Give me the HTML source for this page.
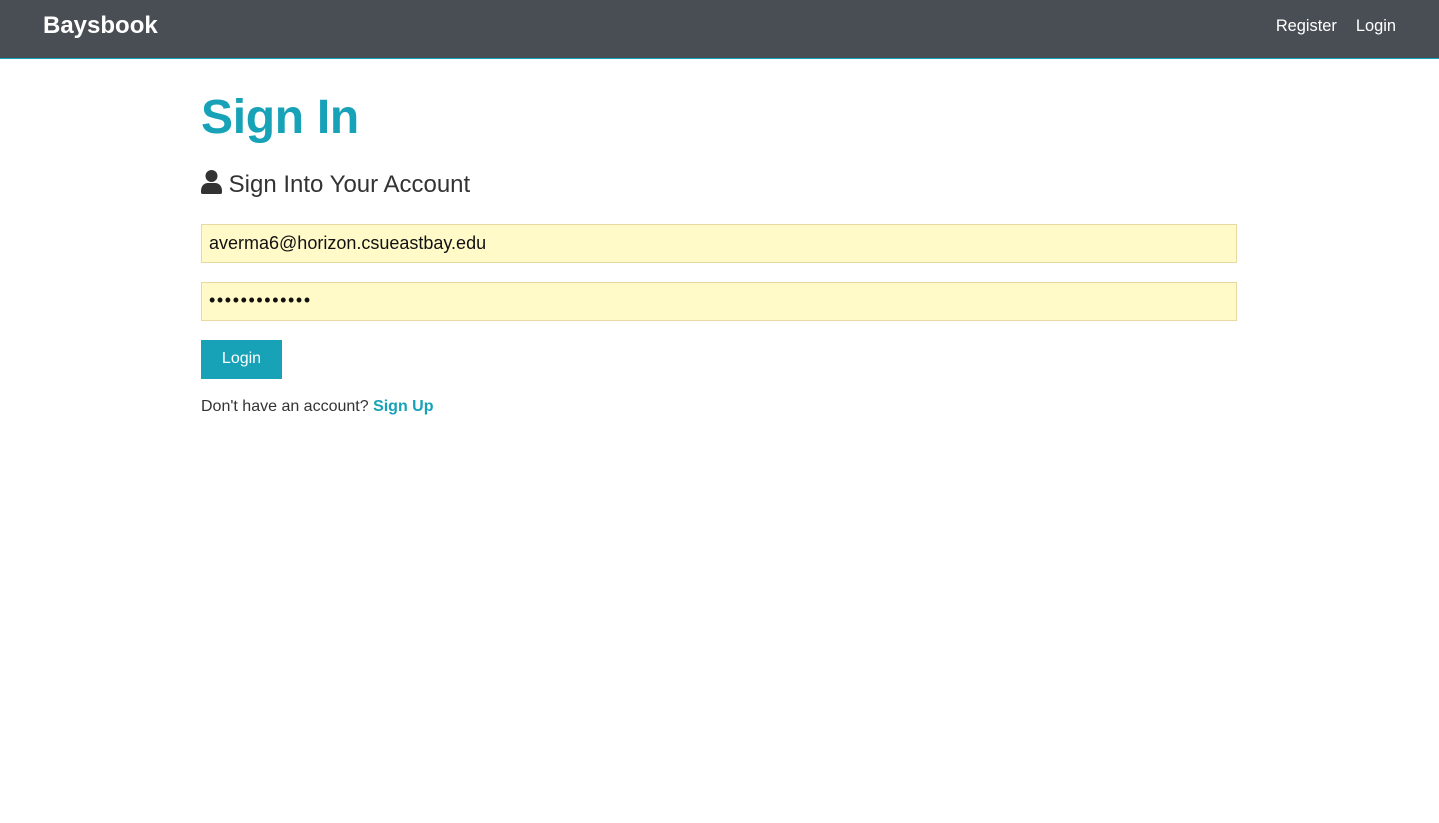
<!DOCTYPE html>
<html><head><meta charset="utf-8"><style>
body{margin:0;font-family:"Liberation Sans",Arial,sans-serif;background:#fff;color:#333;}
.nav{height:58px;background:#494e55;border-bottom:1px solid #17a2b8;position:relative;}
.brand{position:absolute;left:43px;top:12px;color:#fff;font-weight:bold;font-size:24px;}
.links{position:absolute;right:43px;top:17px;color:#fff;font-size:16.4px;}
.links span{margin-left:19px;}
.c{position:absolute;left:201px;width:1036px;}
h1{position:absolute;left:201px;top:90px;margin:0;font-size:48px;color:#17a2b8;font-weight:bold;letter-spacing:-0.3px;}
.sub{position:absolute;left:201px;top:170px;font-size:24px;color:#333;}
.inp{height:39px;background:#fffac8;border:1px solid #e8d9a3;box-sizing:border-box;font-size:18px;color:#111;padding:8px 7px;}
.btn{position:absolute;left:201px;top:340px;width:81px;height:39px;background:#17a2b8;color:#fff;font-size:16px;text-align:center;line-height:38px;}
.foot{position:absolute;left:201px;top:398px;font-size:16px;}
.foot b{color:#17a2b8;font-weight:600;}
</style></head><body>
<div class="nav"><div class="brand">Baysbook</div><div class="links"><span>Register</span><span>Login</span></div></div>
<h1>Sign In</h1>
<div class="sub"><svg width="21" height="24" viewBox="0 0 21 24" style="vertical-align:-2px"><circle cx="10.5" cy="6" r="6" fill="#333"/><path d="M0 21c0-5 3-8 7-8h7c4 0 7 3 7 8v1.5c0 1-.8 1.5-1.5 1.5h-18C.8 24 0 23.5 0 22.5z" fill="#333"/></svg> Sign Into Your Account</div>
<div class="c inp" style="top:224px;">averma6@horizon.csueastbay.edu</div>
<div class="c inp" style="top:282px;letter-spacing:1.6px;font-size:18px;padding-top:7px;">•••••••••••••</div>
<div class="btn">Login</div>
<div class="foot">Don't have an account? <b>Sign Up</b></div>
</body></html>
